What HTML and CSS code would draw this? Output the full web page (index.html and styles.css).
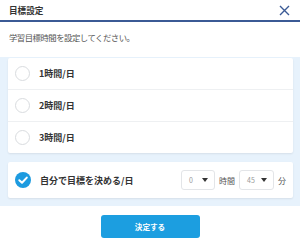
FILE: index.html
```html
<!DOCTYPE html>
<html lang="ja">
<head>
    <meta charset="UTF-8">
    <title>目標設定</title>
    <link rel="stylesheet" href="styles.css">
</head>
<body>
    <div class="header">
        <div class="title">目標設定</div>
        <svg class="close" width="11" height="11" viewBox="0 0 11 11">
            <path d="M1 1 L10 10 M10 1 L1 10" stroke="#3b5a95" stroke-width="1.4" fill="none"/>
        </svg>
    </div>
    <div class="lead">学習目標時間を設定してください。</div>

    <div class="panel">
        <div class="card">
            <div class="row"><span class="radio"></span><span class="label">1時間/日</span></div>
            <div class="row"><span class="radio"></span><span class="label">2時間/日</span></div>
            <div class="row"><span class="radio"></span><span class="label">3時間/日</span></div>
        </div>
        <div class="card">
            <div class="row custom">
                <svg class="check" width="16" height="16" viewBox="0 0 16 16">
                    <circle cx="8" cy="8" r="8" fill="#1d9be0"/>
                    <path d="M4.3 8.2 L7 10.8 L11.8 5.6" stroke="#fff" stroke-width="2" fill="none" stroke-linecap="round" stroke-linejoin="round"/>
                </svg>
                <span class="label">自分で目標を決める/日</span>
                <div class="pickers">
                    <div class="select hours"><span>0</span><span class="caret"></span></div>
                    <span class="unit">時間</span>
                    <div class="select minutes"><span>45</span><span class="caret"></span></div>
                    <span class="unit">分</span>
                </div>
            </div>
        </div>
    </div>

    <div class="footer">
        <button class="submit">決定する</button>
    </div>
</body>
</html>
```

FILE: styles.css
```css
body {
    margin: 0;
    font-family: "Noto Sans CJK JP", "Noto Sans", sans-serif;
    color: #333;
    background: #fff;
}

.header {
    height: 20px;
    border-bottom: 2px solid #3b5a95;
    display: flex;
    align-items: center;
    justify-content: space-between;
    padding: 0 10px 0 9px;
}

.title {
    font-size: 8.6px;
    font-weight: bold;
    color: #333;
}

.close {
    margin-top: 1px;
}

.lead {
    height: 30px;
    padding: 0 0 5px 9px;
    display: flex;
    align-items: center;
    font-size: 8.4px;
    letter-spacing: -0.5px;
    color: #555;
}

.panel {
    background-color: #e7f2fc;
    padding: 1px 7px 8px 8px;
    display: flex;
    flex-direction: column;
    gap: 9px;
}

.card {
    background-color: #fff;
    border-radius: 2px;
    box-shadow: 0 1px 2px rgba(0, 0, 0, 0.08);
}

.row {
    height: 31px;
    display: flex;
    align-items: center;
    padding-left: 7px;
    border-bottom: 1px solid #eef0f2;
}

.row:last-child {
    border-bottom: none;
}

.radio {
    width: 13px;
    height: 13px;
    border: 1.5px solid #d9dcdf;
    border-radius: 50%;
}

.label {
    margin-left: 9px;
    font-size: 9px;
    font-weight: bold;
    color: #333;
}

.row.custom {
    height: 36px;
    padding-right: 7px;
}

.pickers {
    margin-left: auto;
    display: flex;
    align-items: center;
    gap: 4px;
}

.select {
    height: 20px;
    border: 1px solid #e3e5e8;
    border-radius: 3px;
    box-sizing: border-box;
    display: flex;
    align-items: center;
    justify-content: space-between;
    padding: 0 6px 0 7px;
    font-size: 7px;
    color: #999;
}

.select.hours {
    width: 34px;
}

.select.minutes {
    width: 35px;
}

.caret {
    width: 0;
    height: 0;
    border-left: 3px solid transparent;
    border-right: 3px solid transparent;
    border-top: 4px solid #333;
}

.unit {
    font-size: 8px;
    color: #555;
}

.footer {
    display: flex;
    justify-content: center;
    padding-top: 9px;
}

.submit {
    width: 99px;
    height: 23px;
    border: none;
    border-radius: 3px;
    background-color: #1c9ee0;
    color: #fff;
    font-family: inherit;
    font-size: 7.6px;
    font-weight: bold;
    cursor: pointer;
}
```
